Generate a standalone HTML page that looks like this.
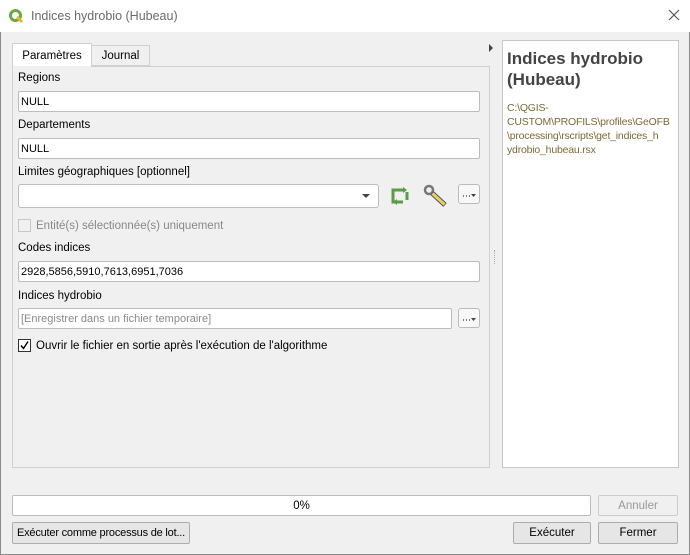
<!DOCTYPE html>
<html><head><style>
*{box-sizing:border-box;margin:0;padding:0}
body{width:690px;height:555px;background:#f0f0f0;font-family:"Liberation Sans",sans-serif;font-size:12px;color:#000;position:relative;overflow:hidden}
.a{position:absolute}
.title{left:0;top:0;width:690px;height:32px;background:#fff}
.inp{position:absolute;background:#fff;border:1px solid #bcbcbc;border-radius:2px;height:21px;padding:4px 2px;font-size:11px;white-space:nowrap}
.lbl{position:absolute;font-size:11.5px;white-space:nowrap}
.btn{position:absolute;background:#e6e6e6;border:1px solid #adadad;border-radius:2px;text-align:center;line-height:20px;font-size:11.5px;white-space:nowrap;overflow:hidden}
.dots{position:absolute;width:22px;height:20px;background:#f8f8f8;border:1px solid #bbb;border-radius:3px}
</style></head><body>
<div class="a" style="left:0;top:0;width:690px;height:555px;border:1px solid #8a8a8a;border-top:none"></div>
<div class="a title"></div>
<svg class="a" style="left:8px;top:8px" width="16" height="16" viewBox="0 0 16 16"><circle cx="7.5" cy="7.5" r="5" fill="none" stroke="#6aaa3a" stroke-width="3"/><path d="M9 9l5 5" stroke="#e9b531" stroke-width="3"/></svg>
<div class="a" style="left:31px;top:9px;font-size:12.5px;color:#6b6b6b">Indices hydrobio (Hubeau)</div>
<svg class="a" style="left:668px;top:9px" width="12" height="12"><path d="M1 1l10 10M11 1L1 11" stroke="#555" stroke-width="1.2"/></svg>

<div class="a" style="left:12px;top:43px;width:80px;height:24px;background:#fff;border:1px solid #d0d0d0;border-bottom:none;text-align:center;line-height:24px;font-size:11.5px">Paramètres</div>
<div class="a" style="left:91px;top:45px;width:59px;height:21px;background:#f0f0f0;border:1px solid #d0d0d0;text-align:center;line-height:21px;font-size:11.5px">Journal</div>
<div class="a" style="left:12px;top:66px;width:478px;height:402px;border:1px solid #d0d0d0;background:#f0f0f0"></div>
<div class="a" style="left:13px;top:66px;width:78px;height:1px;background:#f0f0f0"></div>

<div class="lbl" style="left:18px;top:72px">Regions</div>
<div class="inp" style="left:18px;top:91px;width:462px">NULL</div>
<div class="lbl" style="left:18px;top:119px">Departements</div>
<div class="inp" style="left:18px;top:138px;width:462px">NULL</div>
<div class="lbl" style="left:18px;top:166px">Limites géographiques [optionnel]</div>
<div class="inp" style="left:18px;top:184px;width:361px;height:24px;border-radius:3px"></div>
<div class="a" style="left:362px;top:194px;border:4px solid transparent;border-top:4px solid #444"></div>
<svg class="a" style="left:389px;top:186px" width="22" height="20" viewBox="0 0 22 20"><path d="M4 6V4h10M4 14v2h10M18 6v8" fill="none" stroke="#5a9a4a" stroke-width="3"/><path d="M14 1l4 3-4 3zM8 13l-4 3 4 3z" fill="#5a9a4a"/><path d="M4 6v8" stroke="#5a9a4a" stroke-width="3"/></svg>
<svg class="a" style="left:423px;top:184px" width="26" height="24" viewBox="0 0 26 24"><circle cx="6" cy="6" r="4" fill="none" stroke="#777" stroke-width="2.5"/><path d="M9 9l13 12" stroke="#555" stroke-width="5"/><path d="M9.5 9.5l12 11" stroke="#e6d068" stroke-width="3"/></svg>
<div class="dots" style="left:458px;top:184px"><svg width="20" height="18"><path d="M4 11h1M7 11h1M10 11h1" stroke="#000"/><path d="M12 9h5l-2.5 3z" fill="#444"/></svg></div>
<div class="a" style="left:18px;top:219px;width:13px;height:13px;border:1px solid #c8c8c8;background:#f0f0f0"></div>
<div class="lbl" style="left:36px;top:220px;color:#888">Entité(s) sélectionnée(s) uniquement</div>
<div class="lbl" style="left:18px;top:242px">Codes indices</div>
<div class="inp" style="left:18px;top:261px;width:462px">2928,5856,5910,7613,6951,7036</div>
<div class="lbl" style="left:18px;top:290px">Indices hydrobio</div>
<div class="inp" style="left:18px;top:308px;width:434px;color:#8a8a8a">[Enregistrer dans un fichier temporaire]</div>
<div class="dots" style="left:458px;top:308px"><svg width="20" height="18"><path d="M4 11h1M7 11h1M10 11h1" stroke="#000"/><path d="M12 9h5l-2.5 3z" fill="#444"/></svg></div>
<div class="a" style="left:18px;top:339px;width:13px;height:13px;border:1px solid #333;background:#fff"><svg width="11" height="11" style="display:block"><path d="M2 5.5l2.5 3L9 1.5" fill="none" stroke="#000" stroke-width="1.4"/></svg></div>
<div class="lbl" style="left:36px;top:340px">Ouvrir le fichier en sortie après l'exécution de l'algorithme</div>

<div class="a" style="left:489px;top:44px;border:4px solid transparent;border-left:4px solid #444"></div>
<div class="a" style="left:494px;top:250px;width:1px;height:14px;border-left:1px dotted #aaa"></div>
<div class="a" style="left:502px;top:40px;width:177px;height:428px;background:#fff;border:1px solid #c8c8c8"></div>
<div class="a" style="left:507px;top:48px;font-size:17px;font-weight:bold;color:#444;line-height:21px">Indices hydrobio<br>(Hubeau)</div>
<div class="a" style="left:507px;top:101px;width:172px;font-size:10.5px;color:#7a6a3a;line-height:14px;white-space:nowrap;letter-spacing:-0.2px">C:\QGIS-<br>CUSTOM\PROFILS\profiles\GeOFB<br>\processing\rscripts\get_indices_h<br>ydrobio_hubeau.rsx</div>

<div class="a" style="left:12px;top:495px;width:579px;height:21px;background:#fff;border:1px solid #bcbcbc;border-radius:2px;text-align:center;line-height:20px;font-size:11.5px">0%</div>
<div class="btn" style="left:598px;top:495px;width:80px;height:21px;color:#999;background:#f0f0f0;border-color:#ccc">Annuler</div>
<div class="btn" style="left:12px;top:522px;width:178px;height:22px;font-size:11px;letter-spacing:-0.2px">Exécuter comme processus de lot...</div>
<div class="btn" style="left:513px;top:522px;width:78px;height:22px">Exécuter</div>
<div class="btn" style="left:598px;top:522px;width:80px;height:22px">Fermer</div>
</body></html>
